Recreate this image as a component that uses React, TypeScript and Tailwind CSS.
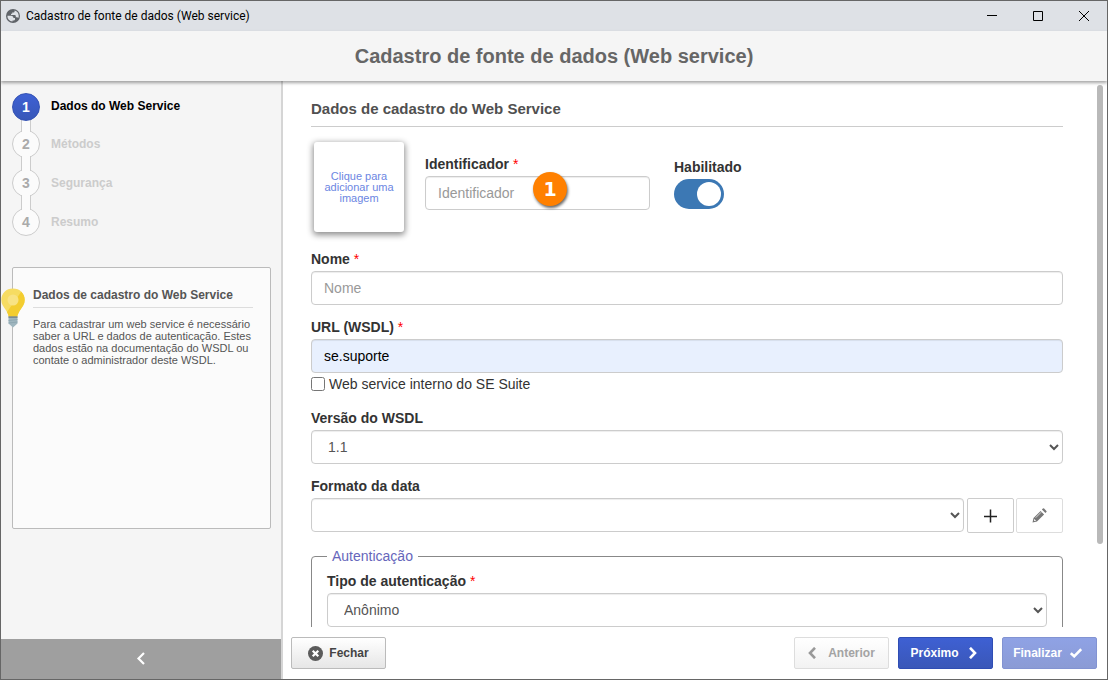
import type { ReactNode } from "react";

const fieldBase =
  "block h-[34px] w-full rounded-[4px] border border-[#ccc] px-3 text-sm shadow-[inset_0_1px_1px_rgba(0,0,0,0.075)] outline-none placeholder:text-[#999] placeholder:opacity-100";

const steps = ["Dados do Web Service", "Métodos", "Segurança", "Resumo"];

function Label({ htmlFor, required, children }: { htmlFor: string; required?: boolean; children: ReactNode }) {
  return (
    <label htmlFor={htmlFor} className="mb-0.5 block text-sm leading-5 font-bold text-[#333]">
      {children}
      {required && <span className="font-normal text-[#f00]"> *</span>}
    </label>
  );
}

function TitleBar() {
  return (
    <div className="flex h-[30px] shrink-0 items-center bg-[#dee1e6] pl-[5px]">
      <svg className="size-[14px]" viewBox="0 0 14 14" aria-hidden="true">
        <circle cx="7" cy="7" r="7" fill="#5f6368" />
        <path
          d="M1.400 6.700h3.600c1.700 0 2.400 1 2.400 2.200H9v1.300c0 .8-.6 1.200-1.300 1.200H6.500v1.200A5.600 5.600 0 0 1 1.400 6.700Z"
          fill="#dee1e6"
        />
        <path
          d="M8.600 1.600v.6c0 .8-.5 1.300-1.300 1.300H6.200v1.300H5v1.200h3.400c.9 0 1.400.5 1.400 1.300v1h1.100c.6 0 1.100.3 1.400.8.400-.9.500-1.600.4-2.500A5.600 5.600 0 0 0 8.600 1.600Z"
          fill="#dee1e6"
        />
      </svg>
      <span className="ml-1.5 font-[Roboto,'Open_Sans',sans-serif] text-[12px] leading-4 text-black">
        Cadastro de fonte de dados (Web service)
      </span>
      <div className="ml-auto flex h-full">
        <button type="button" aria-label="Minimizar" className="flex w-[46px] items-center justify-center">
          <svg className="size-[10px]" viewBox="0 0 10 10" stroke="#000">
            <path d="M0 4.500h10" />
          </svg>
        </button>
        <button type="button" aria-label="Maximizar" className="flex w-[46px] items-center justify-center">
          <svg className="size-[10px]" viewBox="0 0 10 10" stroke="#000" fill="none">
            <path d="M.5.5h9v9h-9z" />
          </svg>
        </button>
        <button type="button" aria-label="Fechar janela" className="flex w-[46px] items-center justify-center">
          <svg className="size-[10px]" viewBox="0 0 10 10" stroke="#000">
            <path d="M0 0l10 10M10 0L0 10" />
          </svg>
        </button>
      </div>
    </div>
  );
}

function Steps() {
  return (
    <ol className="pt-3 pl-[11px]">
      {steps.map((step, i) => {
        const active = i === 0;
        return (
          <li key={step} className="flex gap-[11px]">
            <div className="flex w-7 shrink-0 flex-col items-center">
              <span
                className={
                  active
                    ? "z-20 flex size-7 items-center justify-center rounded-full border border-[#3452b4] bg-linear-to-b from-[#3e61d4] to-[#3857b8] text-sm font-bold text-white"
                    : "flex size-7 items-center justify-center rounded-full border border-[#ccc] bg-[#fbfbfb] text-sm font-bold text-[#aaa]"
                }
              >
                {i + 1}
              </span>
              {i < steps.length - 1 && (
                <span
                  className={
                    active
                      ? "z-10 -my-0.5 h-[13px] w-[10px] border-x border-[#ccc] bg-[#fbfbfb]"
                      : "z-10 -my-0.5 h-[15px] w-[10px] border-x border-[#ccc] bg-[#fbfbfb]"
                  }
                />
              )}
            </div>
            <span className={active ? "text-[12px] leading-[26px] font-bold text-black" : "text-[12px] leading-7 font-bold text-[#ccc]"}>
              {step}
            </span>
          </li>
        );
      })}
    </ol>
  );
}

function Bulb() {
  return (
    <svg className="absolute top-5 -left-3 h-[40px] w-6" viewBox="0 0 24 40" aria-hidden="true">
      <path d="M12 .5C5.200.5.300 5.300.300 12c0 4.300 2.200 6.700 4.300 9.800 1.600 2.400 2.900 4.900 3.200 7.200h8.400c.3-2.300 1.600-4.800 3.200-7.200 2.100-3.100 4.300-5.500 4.300-9.800C23.700 5.300 18.800.5 12 .5Z" fill="#f6dc62" />
      <path d="M20.200 3.700c2.200 2 3.500 4.900 3.500 8.300 0 4.300-2.200 6.700-4.300 9.800-1.600 2.400-2.900 4.900-3.200 7.200H7.800c-.2-1.600-.9-3.200-1.800-4.900Z" fill="#f3cd30" />
      <circle cx="12" cy="12" r="5.500" fill="#f8e384" />
      <path d="M7.500 28.500h9v7l-2.500 2.300-2 1.700-2-1.700-2.500-2.300Z" fill="#9fb6bf" />
      <path d="M7.500 28.500h9v1.200h-9z" fill="#6d7a7d" />
      <path d="M7.500 32.500l9-1M7.500 35l9-1" stroke="#86a0aa" strokeWidth=".7" />
    </svg>
  );
}

function Sidebar() {
  return (
    <aside className="flex w-[282px] shrink-0 flex-col border-r-2 border-[#d5d5d5] bg-[#f5f5f5]">
      <Steps />
      <section className="relative mt-[31px] mr-[10px] ml-[11px] h-[262px] rounded-[2px] border border-[#bbb] bg-[#fbfbfb] pt-5 pr-[17px] pl-5 text-[#555]">
        <Bulb />
        <h2 className="border-b border-[#ddd] pb-1 text-[12px] leading-[15px] font-bold whitespace-nowrap">
          Dados de cadastro do Web Service
        </h2>
        <p className="mt-[10px] text-[11px] leading-3">
          Para cadastrar um web service é necessário saber a URL e dados de autenticação. Estes dados estão na
          documentação do WSDL ou contate o administrador deste WSDL.
        </p>
      </section>
      <button type="button" aria-label="Recolher painel" className="mt-auto flex h-10 items-center justify-center bg-[#9f9f9f]">
        <svg className="size-[14px]" viewBox="0 0 14 14" fill="none" stroke="#fff" strokeWidth="2.200">
          <path d="M10 1L4.500 6.500l5.500 5.500" />
        </svg>
      </button>
    </aside>
  );
}

function Form() {
  return (
    <form className="pr-[44px] pl-7">
      <h2 className="border-b border-[#ccc] pt-[18px] pb-[7px] text-[15px] leading-5 font-bold text-[#505050]">
        Dados de cadastro do Web Service
      </h2>
      <div className="flex items-start">
        <button
          type="button"
          className="mt-[15px] ml-[3px] flex size-[90px] items-center justify-center rounded-[3px] bg-white px-2 text-[11px] leading-[11px] text-[#6c86e2] shadow-[0_2px_6px_1px_rgba(0,0,0,0.45)]"
        >
          Clique para adicionar uma imagem
        </button>
        <div className="relative mt-[27px] ml-[21px] w-[225px]">
          <Label htmlFor="identificador" required>Identificador</Label>
          <input id="identificador" placeholder="Identificador" className={`${fieldBase} bg-white`} />
          <span className="absolute top-[18px] left-[108px] flex size-[34px] items-center justify-center rounded-full bg-[#ff8000] font-['DejaVu_Sans',sans-serif] text-[19px] font-bold text-white shadow-[1px_2px_3px_rgba(0,0,0,0.6)]">
            1
          </span>
        </div>
        <div className="mt-[30px] ml-6">
          <Label htmlFor="habilitado">Habilitado</Label>
          <input
            id="habilitado"
            type="checkbox"
            role="switch"
            defaultChecked
            className="flex h-[30px] w-[50px] appearance-none items-center rounded-full bg-[#aaa] p-[3px] before:size-6 before:rounded-full before:bg-white checked:justify-end checked:bg-[#3c78b4]"
          />
        </div>
      </div>
      <div className="mt-[17px]">
        <Label htmlFor="nome" required>Nome</Label>
        <input id="nome" placeholder="Nome" className={`${fieldBase} bg-white`} />
      </div>
      <div className="mt-3">
        <Label htmlFor="url" required>URL (WSDL)</Label>
        <input id="url" defaultValue="se.suporte" className={`${fieldBase} bg-[#e8f0fe] text-black`} />
        <div className="mt-px flex h-5 items-center gap-1">
          <input id="interno" type="checkbox" className="size-[14px]" />
          <label htmlFor="interno" className="text-sm leading-5 text-[#333]">Web service interno do SE Suite</label>
        </div>
      </div>
      <div className="mt-[14px]">
        <Label htmlFor="versao">Versão do WSDL</Label>
        <select id="versao" className={`${fieldBase} bg-white text-[#555]`}>
          <option>1.1</option>
        </select>
      </div>
      <div className="mt-3">
        <Label htmlFor="formato">Formato da data</Label>
        <div className="flex items-start">
          <select id="formato" defaultValue="" className={`${fieldBase} min-w-0 flex-1 bg-white text-[#555]`}>
            <option value=""></option>
          </select>
          <button type="button" aria-label="Adicionar formato" className="ml-[3px] flex h-[35px] w-[47px] items-center justify-center rounded-[2px] border border-[#ccc] bg-white">
            <svg className="size-[14px]" viewBox="0 0 14 14" stroke="#222" strokeWidth="1.500">
              <path d="M6.500 .5v13M0 7.500h13" />
            </svg>
          </button>
          <button type="button" disabled aria-label="Editar formato" className="ml-0.5 flex h-[35px] w-[47px] items-center justify-center rounded-[2px] border border-[#ddd] bg-white">
            <svg className="size-[15px]" viewBox="0 0 15 15" fill="#777">
              <path d="M8.600 2.900L12.100 6.400 5 13.500.5 14.500l1-4.500ZM9.900 1.600L10.900.6q.6-.5 1.200 0l2.300 2.300q.6.600 0 1.200L13.400 5.100Z" />
              <path d="M2.300 10.900l1.800 1.800-1.500.4-.7-.7Z" fill="#fff" />
              <path d="M3.700 9.700L9.200 4.200" stroke="#fff" strokeWidth=".7" />
            </svg>
          </button>
        </div>
      </div>
      <fieldset className="mt-[13px] rounded-[4px] border border-[#888] px-[15px] pb-4">
        <legend className="px-[5px] text-sm leading-5 text-[#6666bb]">Autenticação</legend>
        <div className="mt-[5px]">
          <Label htmlFor="tipo" required>Tipo de autenticação</Label>
          <select id="tipo" className={`${fieldBase} bg-white text-[#555]`}>
            <option>Anônimo</option>
          </select>
        </div>
      </fieldset>
    </form>
  );
}

function Footer() {
  const base = "flex h-8 w-[95px] items-center justify-center rounded-[2px] border text-[12px] font-bold";
  return (
    <footer className="flex h-[52px] shrink-0 items-center gap-[9px] pr-[10px] pl-2">
      <button type="button" className={`${base} mr-auto gap-1.5 border-[#bbb] bg-linear-to-b from-white to-[#e6e6e6] text-[#444]`}>
        <svg className="size-[15px]" viewBox="0 0 15 15">
          <circle cx="7.500" cy="7.500" r="7.500" fill="#5b5b5b" />
          <path d="M4.700 4.700l5.600 5.600M10.300 4.700l-5.600 5.600" stroke="#fff" strokeWidth="2.200" />
        </svg>
        Fechar
      </button>
      <button type="button" disabled className={`${base} gap-3 border-[#ddd] bg-linear-to-b from-white to-[#f2f2f2] text-[#a3a3a3]`}>
        <svg className="h-3 w-2" viewBox="0 0 8 12" fill="none" stroke="#999" strokeWidth="2.600">
          <path d="M7 .8L2 6l5 5.200" />
        </svg>
        Anterior
      </button>
      <button type="button" className={`${base} gap-2.5 border-[#2f4db4] bg-linear-to-b from-[#3e60d3] to-[#3a57b8] pr-1 text-white`}>
        Próximo
        <svg className="h-3 w-2" viewBox="0 0 8 12" fill="none" stroke="#fff" strokeWidth="2.600">
          <path d="M1 .8L6 6l-5 5.200" />
        </svg>
      </button>
      <button type="button" disabled className={`${base} gap-2 border-[#8293d2] bg-linear-to-b from-[#8fa2e5] to-[#8b9bd5] pr-1 text-white`}>
        Finalizar
        <svg className="h-[10px] w-3" viewBox="0 0 12 10" fill="none" stroke="#fff" strokeWidth="2.600">
          <path d="M.8 5.200L4.200 8.300 11.200 1.200" />
        </svg>
      </button>
    </footer>
  );
}

export default function App() {
  return (
    <div className="flex h-screen flex-col overflow-hidden border border-[#666] bg-white font-['Liberation_Sans',Arial,sans-serif]">
      <TitleBar />
      <header className="z-30 flex h-[50px] shrink-0 items-center justify-center bg-[#f5f5f5] shadow-[0_2px_3px_rgba(0,0,0,0.35)]">
        <h1 className="text-xl font-bold text-[#666]">Cadastro de fonte de dados (Web service)</h1>
      </header>
      <div className="flex min-h-0 flex-1">
        <Sidebar />
        <main className="flex min-w-0 flex-1 flex-col">
          <div className="relative min-h-0 flex-1 overflow-hidden">
            <Form />
            <div className="absolute top-1 right-[4px] h-[84%] w-1.5 rounded-full bg-[#b9b9b9]" />
          </div>
          <Footer />
        </main>
      </div>
    </div>
  );
}
